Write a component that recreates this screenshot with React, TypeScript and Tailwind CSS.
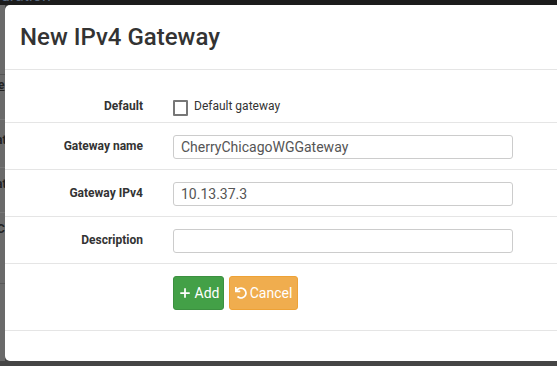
import React from "react";
import { Plus } from "lucide-react";
import { FaUndo } from "react-icons/fa";

const font = { fontFamily: "Roboto, 'Liberation Sans', sans-serif" };

type FieldRowProps = {
  label: string;
  value?: string;
};

const FieldRow = ({ label, value = "" }: FieldRowProps) => (
  <div className="flex items-center h-[47px] pt-[12px] pb-[10px] border-b border-[#e5e5e5]">
    <div className="w-[138px] shrink-0 text-right text-[12px] font-bold text-[#333] leading-none -mt-[2px]">
      {label}
    </div>
    <input
      readOnly
      value={value}
      className="ml-[30px] w-[340px] h-[24px] px-[7px] border border-[#ccc] rounded-[3px] text-[14px] text-[#555] outline-none bg-white"
      style={font}
    />
  </div>
);

export default function App() {
  return (
    <div className="w-[557px] h-[366px] overflow-hidden flex flex-col bg-[#454545]" style={font}>
      {/* backdrop top bar */}
      <div className="h-[5px] shrink-0 bg-[#1c1c1c] overflow-hidden">
        <div className="-mt-[12px] pl-[1px] text-[16px] text-[#5a6a80] leading-none">uration</div>
      </div>

      <div className="flex flex-1 min-h-0">
        {/* backdrop left strip */}
        <div className="w-[5px] shrink-0 bg-[#6a6a6a] overflow-hidden flex flex-col text-[12px] font-bold text-[#222] leading-none">
          <div className="h-[69px]" />
          <div className="h-[1px] bg-[#555]" />
          <div className="h-[4px]" />
          <div className="-ml-[2px] underline">e</div>
          <div className="h-[28px]" />
          <div className="h-[1px] bg-[#777]" />
          <div className="h-[14px]" />
          <div className="-ml-[4px]">at</div>
          <div className="h-[21px]" />
          <div className="h-[1px] bg-[#777]" />
          <div className="h-[10px]" />
          <div className="-ml-[4px]">at</div>
          <div className="h-[22px]" />
          <div className="h-[1px] bg-[#777]" />
          <div className="h-[10px]" />
          <div className="-ml-[3px]">C</div>
          <div className="h-[48px]" />
          <div className="h-[1px] bg-[#595959]" />
        </div>

        {/* modal */}
        <div className="flex-1 bg-white rounded-l-[5px] flex flex-col">
          <div className="h-[65px] shrink-0 flex items-center pl-[15px] border-b border-[#e5e5e5]">
            <h4 className="text-[24px] font-medium text-[#333] leading-none">New IPv4 Gateway</h4>
          </div>

          <div className="flex items-center h-[53px] pt-[26px] pb-[7px] border-b border-[#e5e5e5]">
            <div className="w-[138px] shrink-0 text-right text-[12px] font-bold text-[#333] leading-none">
              Default
            </div>
            <div className="ml-[30px] flex items-center">
              <span className="w-[15px] h-[16px] border-2 border-[#777] rounded-[1px] bg-white mt-[4px]" />
              <span className="ml-[6px] text-[12px] text-[#333] leading-none">Default gateway</span>
            </div>
          </div>

          <FieldRow label="Gateway name" value="CherryChicagoWGGateway" />
          <FieldRow label="Gateway IPv4" value="10.13.37.3" />
          <FieldRow label="Description" />

          <div className="flex h-[67px] pt-[12px] border-b border-[#e5e5e5]">
            <div className="w-[138px] shrink-0" />
            <div className="ml-[30px] flex gap-[5px] items-start">
              <button className="w-[51px] h-[34px] flex items-center justify-center gap-[3px] bg-[#43a047] border border-[#3c9040] rounded-[3px] text-white text-[14px]">
                <Plus size={14} strokeWidth={3} />
                <span>Add</span>
              </button>
              <button className="w-[69px] h-[34px] flex items-center justify-center gap-[3px] bg-[#f0ad4e] border border-[#eea236] rounded-[3px] text-white text-[14px]">
                <FaUndo size={12} />
                <span>Cancel</span>
              </button>
            </div>
          </div>

          <div className="flex-1" />
        </div>
      </div>

      {/* backdrop bottom bar */}
      <div className="h-[5px] shrink-0 bg-[#454545]" />
    </div>
  );
}
